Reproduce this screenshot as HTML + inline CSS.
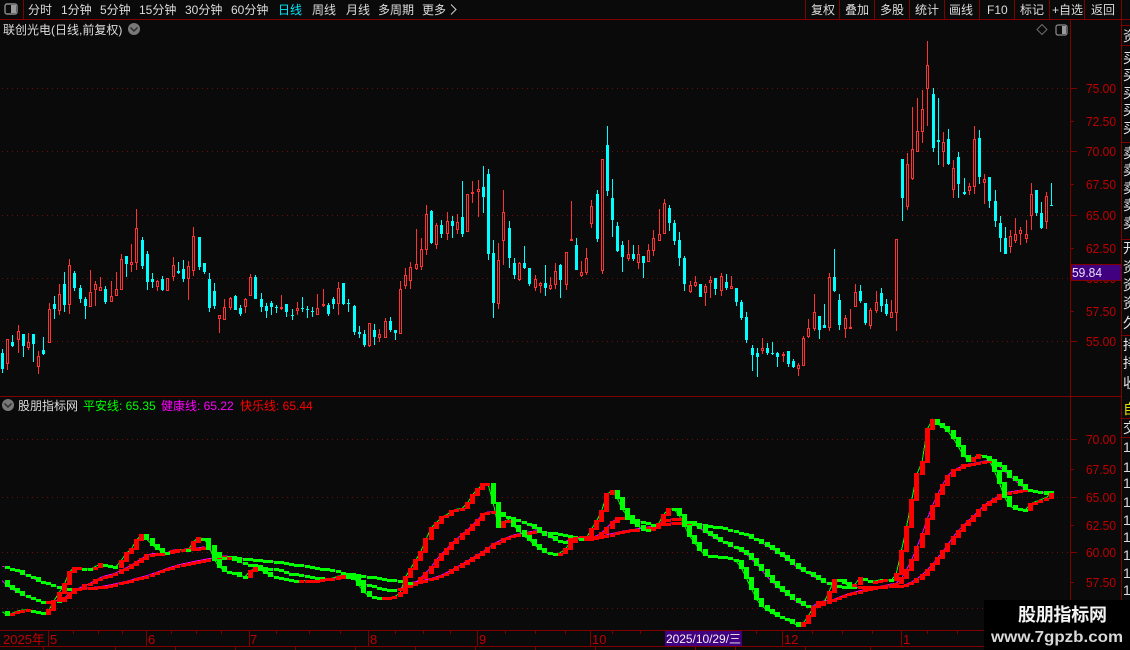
<!DOCTYPE html>
<html><head><meta charset="utf-8"><title>股朋指标网</title>
<style>
html,body{margin:0;padding:0;background:#0a0a0a;width:1130px;height:650px;overflow:hidden}
svg{display:block;position:absolute;left:0;top:0}
text{font-family:"Liberation Sans","WenQuanYi Zen Hei","Noto Sans CJK SC",sans-serif;font-size:12px;fill:#dcdcdc}
.ax{fill:#c00000;font-size:13px}
.c{font-family:"WenQuanYi Zen Hei","Noto Sans CJK SC",sans-serif;font-size:14px;fill:#e6e6e6}
</style></head><body>
<svg id="s" width="1130" height="650" viewBox="0 0 1130 650">
<rect width="1130" height="650" fill="#0a0a0a"/>
<g id="grid" stroke="#6a1010" stroke-width="1" stroke-dasharray="1 4" shape-rendering="crispEdges">
<path d="M2 88.5H1068M2 151.5H1068M2 215.5H1068M2 278.5H1068M2 341.5H1068M2 439.5H1068M2 497.5H1068M2 552.5H1068M2 608.5H1068"/>
</g>
<g id="chart" shape-rendering="crispEdges"></g>
<g stroke="#800000" stroke-width="1" fill="none" shape-rendering="crispEdges">
<path d="M0 19.5H1130M23.5 0V19M805.5 0V19M839.5 0V19M874.5 0V19M909.5 0V19M944.5 0V19M979.5 0V19M1014.5 0V19M1049.5 0V19M1084.5 0V19"/>
<path d="M1070.5 19V631M1121.5 0V650M0 396.5H1121M0 630.5H1121M0 646.5H1121"/>
<path d="M1122 25.5H1130M1122 45.5H1130M1122 142.5H1130M1122 239.5H1130M1122 335.5H1130M1122 418.5H1130M1122 437.5H1130"/>
<path d="M1071 88.5H1077M1071 121.5H1074M1071 151.5H1077M1071 184.5H1074M1071 215.5H1077M1071 248.5H1074M1071 278.5H1077M1071 311.5H1074M1071 341.5H1077"/>
<path d="M1071 439.5H1077M1071 469.5H1074M1071 497.5H1077M1071 525.5H1074M1071 552.5H1077M1071 582.5H1074M1071 608.5H1077"/>
<path d="M48.5 631V646M146.5 631V646M249.5 631V646M368.5 631V646M477.5 631V646M590.5 631V646M782.5 631V646M901.5 631V646"/>
<path d="M73.5 631V634M98.5 631V634M122.5 631V634M171.5 631V634M196.5 631V634M221.5 631V634M276.5 631V634M309.5 631V634M340.5 631V634M395.5 631V634M423.5 631V634M450.5 631V634M505.5 631V634M535.5 631V634M565.5 631V634M612.5 631V634M640.5 631V634M756.5 631V634M812.5 631V634M842.5 631V634M872.5 631V634M927.5 631V634M957.5 631V634"/>
<path d="M43.5 647V650M115.5 647V650M175.5 647V650M235.5 647V650M295.5 647V650M355.5 647V650M415.5 647V650M475.5 647V650M535.5 647V650M595.5 647V650M695.5 647V650M735.5 647V650M805.5 647V650M870.5 647V650"/>
</g>
<!-- toolbar -->
<rect x="5" y="4" width="12" height="10" rx="2" fill="none" stroke="#8c8c8c" stroke-width="1.4"/>
<rect x="11" y="5" width="5" height="8" fill="#9a9a9a"/>
<text x="28" y="14">分时</text><text x="61" y="14">1分钟</text><text x="100" y="14">5分钟</text><text x="139" y="14">15分钟</text><text x="185" y="14">30分钟</text><text x="231" y="14">60分钟</text>
<text x="278" y="14" style="fill:#00e8ff">日线</text><text x="312" y="14">周线</text><text x="346" y="14">月线</text><text x="378" y="14">多周期</text><text x="422" y="14">更多</text>
<path d="M451 4.5L456 9.5L451 14.5" fill="none" stroke="#d0d0d0" stroke-width="1"/>
<text x="811" y="14">复权</text><text x="845" y="14">叠加</text><text x="880" y="14">多股</text><text x="915" y="14">统计</text><text x="949" y="14">画线</text><text x="987" y="14">F10</text><text x="1020" y="14">标记</text><text x="1052" y="14">+自选</text><text x="1091" y="14">返回</text>
<!-- title -->
<text x="3" y="34">联创光电(日线,前复权)</text>
<circle cx="134" cy="29" r="6" fill="#787878"/><path d="M130.5 27.5L134 31L137.5 27.5" fill="none" stroke="#2a2a2a" stroke-width="1.4"/>
<path d="M1042 24.5L1047 29.5L1042 34.5L1037 29.5Z" fill="none" stroke="#6e6e6e"/>
<rect x="1056" y="25" width="11" height="10" rx="2" fill="none" stroke="#8c8c8c" stroke-width="1.2"/><rect x="1062" y="26" width="4" height="8" fill="#9a9a9a"/>
<!-- axis labels top -->
<g>
<text class="ax" x="1086" y="93" textLength="30" lengthAdjust="spacingAndGlyphs">75.00</text>
<text class="ax" x="1086" y="126" textLength="30" lengthAdjust="spacingAndGlyphs">72.50</text>
<text class="ax" x="1086" y="156" textLength="30" lengthAdjust="spacingAndGlyphs">70.00</text>
<text class="ax" x="1086" y="189" textLength="30" lengthAdjust="spacingAndGlyphs">67.50</text>
<text class="ax" x="1086" y="220" textLength="30" lengthAdjust="spacingAndGlyphs">65.00</text>
<text class="ax" x="1086" y="253" textLength="30" lengthAdjust="spacingAndGlyphs">62.50</text>
<text class="ax" x="1086" y="283" textLength="30" lengthAdjust="spacingAndGlyphs">60.00</text>
<text class="ax" x="1086" y="316" textLength="30" lengthAdjust="spacingAndGlyphs">57.50</text>
<text class="ax" x="1086" y="346" textLength="30" lengthAdjust="spacingAndGlyphs">55.00</text>
</g>
<rect x="1071.5" y="264.5" width="50" height="16" fill="#400080" stroke="#800000" shape-rendering="crispEdges"/>
<text x="1072" y="277" style="fill:#e8e0ff;font-size:13px" textLength="30" lengthAdjust="spacingAndGlyphs">59.84</text>
<!-- indicator header -->
<circle cx="8" cy="405" r="6" fill="#787878"/><path d="M4.5 403.5L8 407L11.5 403.5" fill="none" stroke="#2a2a2a" stroke-width="1.4"/>
<text x="18" y="410">股朋指标网</text>
<text x="83" y="410" style="fill:#00ff00">平安线: 65.35</text>
<text x="161" y="410" style="fill:#ff00ff">健康线: 65.22</text>
<text x="240" y="410" style="fill:#ff0000">快乐线: 65.44</text>
<!-- axis labels bottom -->
<g>
<text class="ax" x="1086" y="444" textLength="30" lengthAdjust="spacingAndGlyphs">70.00</text>
<text class="ax" x="1086" y="474" textLength="30" lengthAdjust="spacingAndGlyphs">67.50</text>
<text class="ax" x="1086" y="502" textLength="30" lengthAdjust="spacingAndGlyphs">65.00</text>
<text class="ax" x="1086" y="530" textLength="30" lengthAdjust="spacingAndGlyphs">62.50</text>
<text class="ax" x="1086" y="557" textLength="30" lengthAdjust="spacingAndGlyphs">60.00</text>
<text class="ax" x="1086" y="587" textLength="30" lengthAdjust="spacingAndGlyphs">57.50</text>
</g>
<!-- time axis -->
<g>
<text x="3" y="644" style="fill:#c00000;font-size:13px">2025年</text>
<text x="50" y="644" style="fill:#c00000;font-size:13px">5</text><text x="148" y="644" style="fill:#c00000;font-size:13px">6</text><text x="250" y="644" style="fill:#c00000;font-size:13px">7</text>
<text x="370" y="644" style="fill:#c00000;font-size:13px">8</text><text x="479" y="644" style="fill:#c00000;font-size:13px">9</text><text x="592" y="644" style="fill:#c00000;font-size:13px">10</text>
<text x="784" y="644" style="fill:#c00000;font-size:13px">12</text><text x="903" y="644" style="fill:#c00000;font-size:13px">1</text>
</g>
<rect x="665" y="631" width="77" height="15" fill="#400080" shape-rendering="crispEdges"/>
<text x="666" y="643" style="fill:#f0f0f0" textLength="75">2025/10/29/三</text>
<!-- right column -->
<g>
<text class="c" x="1123" y="41">资</text><text class="c" x="1123" y="63">买</text><text class="c" x="1123" y="80">买</text><text class="c" x="1123" y="98">买</text><text class="c" x="1123" y="115">买</text><text class="c" x="1123" y="133">买</text>
<text class="c" x="1123" y="158">卖</text><text class="c" x="1123" y="175">卖</text><text class="c" x="1123" y="193">卖</text><text class="c" x="1123" y="210">卖</text><text class="c" x="1123" y="228">卖</text>
<text class="c" x="1123" y="253">开</text><text class="c" x="1123" y="272">资</text><text class="c" x="1123" y="290">资</text><text class="c" x="1123" y="308">资</text><text class="c" x="1123" y="328">久</text>
<text class="c" x="1123" y="350">持</text><text class="c" x="1123" y="368">持</text><text class="c" x="1123" y="388">收</text>
<text class="c" x="1123" y="414" style="fill:#e0e000">自</text><text class="c" x="1123" y="433">交</text>
</g>
<g>
<text x="1123" y="452" style="font-size:14px">1</text><text x="1123" y="472" style="font-size:14px">1</text><text x="1123" y="488" style="font-size:14px">1</text><text x="1123" y="507" style="font-size:14px">1</text><text x="1123" y="525" style="font-size:14px">1</text><text x="1123" y="542" style="font-size:14px">1</text><text x="1123" y="560" style="font-size:14px">1</text><text x="1123" y="578" style="font-size:14px">1</text><text x="1123" y="595" style="font-size:14px">1</text>
</g>
<!-- watermark -->
<rect x="984" y="600" width="146" height="50" fill="#000"/>
<text x="1018" y="621" style="fill:#f4f4f4;font-size:18px;font-weight:bold" textLength="89">股朋指标网</text>
<text x="991" y="642" style="fill:#d8d8d8;font-size:16px;font-weight:bold" textLength="132" lengthAdjust="spacingAndGlyphs">www.7gpzb.com</text>
</svg>
<script>
var sets=[
[0,200,"c7,447,459,507,519 r22,418,418,491,510 c37,405,426,438,441 r55,375,394,421,459 c70,402,402,438,471 r85,400,427,445,450 c100,402,402,432,486 r115,453,469,502,522 c130,411,450,462,465 r148,309,328,428,428 c163,288,312,327,357 r178,252,283,332,345 c193,216,252,315,336 r208,177,196,314,342 c223,213,219,264,273 c241,255,264,297,309 c256,291,297,318,357 r271,210,277,320,320 r286,243,253,269,318 r301,231,262,272,273 c316,258,267,306,312 r334,243,289,307,307 r349,216,268,287,288 r364,162,178,269,269 c379,168,168,192,231 r394,132,187,194,216 r409,27,85,188,210 c427,111,120,198,207 c442,153,162,246,270 c457,219,237,246,264 r472,240,244,260,273 c487,228,237,270,273 r502,233,235,272,273 r520,171,196,230,243 c535,186,213,219,222 c550,180,207,237,246 r565,183,199,236,300 r580,81,109,212,228 c598,111,111,201,210 c613,189,189,216,222 c628,219,237,324,336 c643,249,273,318,327 r658,346,346,356,399 r673,297,322,359,360 r691,292,295,323,330 c706,285,288,330,330 c721,316,324,342,348 r736,294,298,320,339 r751,222,232,287,288 c766,225,231,297,297 c784,279,297,321,336 c799,309,318,333,354 c814,303,309,321,345 c829,315,321,324,339"],
[280,150,"r4,435,471,477,480 c19,462,462,486,501 c37,477,495,497,510 r52,456,474,483,495 c67,441,474,478,486 c82,468,477,480,504 c97,471,483,485,501 r112,432,474,495,495 r130,417,462,468,471 c145,459,465,492,498 c160,441,447,462,477 r175,396,414,462,495 c190,399,399,462,465 c205,447,459,462,486 c223,465,468,546,555 c238,528,546,552,564 c253,540,552,585,590 r268,519,519,588,590 c283,522,540,562,585 r298,537,552,564,575 r316,504,514,564,564 c331,501,513,541,546 c346,540,540,549,570 r361,393,417,552,552 r376,354,375,408,417 r391,336,351,393,417 r409,237,342,357,360 r424,264,297,351,360 r439,165,192,300,315 c454,180,183,279,282 r469,219,225,285,297 c484,210,225,252,264 r502,186,213,252,270 c517,198,213,228,264 r532,192,216,240,252 c547,93,201,252,261 r562,132,132,246,246 r577,93,126,132,159 r595,90,117,126,201 c610,48,111,141,189 c625,57,72,312,330 c640,270,309,459,504 r655,279,330,462,477 r670,120,186,273,345 c688,213,234,324,354 c703,324,339,375,387 r718,336,339,390,393 c733,288,339,354,357 c748,354,354,402,408 r766,375,387,414,423 r781,396,399,408,429 c796,345,399,414,438 r811,381,405,417,420 r826,339,363,405,417"],
[560,120,"c0,432,435,480,534 r19,397,397,494,510 r34,243,358,362,362 c49,354,375,450,450 r64,423,457,468,471 r79,384,415,459,465 r94,240,259,312,324 c112,210,222,357,366 r127,118,118,452,462 c142,18,75,213,228 c157,177,234,300,351 c172,306,318,393,396 c187,363,375,411,456 r205,360,403,417,423 c220,375,402,417,423 r235,375,403,428,447 c250,408,408,429,474 r265,372,391,425,426 r280,330,355,392,408 r298,267,343,362,363 r313,237,250,342,342 c328,255,264,309,333 c343,300,309,363,375 c358,336,360,414,438 c373,408,414,492,513 r391,484,496,516,519 r406,468,487,498,501 c421,492,492,531,531 r436,492,499,518,558 r451,468,481,488,534 c466,474,474,507,525 r484,459,469,513,528 c499,462,486,504,510 r514,468,499,506,507 c529,504,504,546,558 c544,540,546,594,600 c559,576,591,660,669 c577,675,684,705,753 c592,684,699,711,771 r607,654,684,693,702 c622,669,684,699,705 c637,666,699,702,705 c652,696,699,711,741 r670,696,702,708,726 c685,693,693,732,741 c700,717,723,741,744 r715,729,736,747,768 r730,648,654,738,738 r745,597,624,651,654 r763,522,576,627,633 c778,588,588,630,657 c793,552,615,624,624 r808,459,471,624,633 c823,387,471,513,516"],
[840,30,"c-2,792,810,885,900 r16,855,865,896,924 r31,837,890,896,896 r46,762,786,830,830 c61,765,783,813,819 c76,819,819,879,885 r91,834,840,888,897 r109,783,816,843,849 c124,774,789,828,846 c139,807,822,852,858 r154,810,846,863,864 r169,627,627,848,903 c187,387,387,504,573 r202,369,403,530,540 r217,231,357,447,450 r232,204,304,365,365 r247,180,237,306,339 r262,33,105,177,288 c280,174,192,354,366 c295,204,330,335,405 r310,306,336,366,411 c325,297,327,402,405 r340,390,414,480,504 c355,366,381,462,504 c373,444,486,492,495 r388,459,468,483,495 r403,288,327,471,492 c418,300,324,441,462 r433,432,447,458,522 c448,441,441,513,534 c466,480,513,573,591 c481,558,579,624,666 c496,591,624,672,672 r511,600,618,651,669 r526,564,612,633,639 r541,591,600,612,645 r559,570,612,627,639 r574,459,492,558,600 c589,480,480,549,558 c604,516,549,594,597 r619,486,498,576,597 c634,459,525,528,528"]
];
var o=[],BG="#0a0a0a",RED="#ff3232",CY="#00ffff";
function R(x,y,w,h,f){o.push('<rect x="'+x+'" y="'+y+'" width="'+w+'" height="'+h+'" fill="'+f+'"/>');}
sets.forEach(function(s){s[2].split(" ").forEach(function(t){
 var r=t[0]=="r",a=t.slice(1).split(",").map(Number),cx=Math.floor(s[0]+a[0]/3),
 wt=Math.round(s[1]+a[1]/3),bt=Math.round(s[1]+a[2]/3),bb=Math.round(s[1]+a[3]/3),wb=Math.round(s[1]+a[4]/3);
 if(bb-bt<1)bb=bt+1;var col=r?RED:CY;
 if(wb>wt)R(cx,wt,1,wb-wt,col);
 R(cx-1,bt,3,bb-bt,col);
 if(r&&bb-bt>2)R(cx,bt+1,1,bb-bt-2,BG);
});});
var F=[[0,390,[8,665,22,676,55,662,80,658,115,665,130,674,148,660,163,630,178,607,193,583,208,545,223,533,240,533,256,538,270,538,285,530,300,522,315,525,335,530,350,530,365,510,380,488,395,476,409,450,425,435,440,447,457,465,470,475,487,486,505,488,520,484,535,480,550,478,565,480,580,455,598,441,613,447,628,470,643,510,658,530,673,543,690,547,706,550,721,558,736,560,751,543,766,535,784,540,799,550,814,558,829,560,860,567,875,572,900,572,935,572,965,568,990,567]],
[330,460,[0,358,25,348,50,345,70,350,88,378,103,398,118,408,133,410,148,415,165,413,190,413,211,398,226,352,241,327,259,298,274,272,289,235,304,203,319,188,334,172,352,163,367,153,382,147,397,145,412,130,427,105,445,85,460,72,475,72,490,130,505,200,520,185,538,178,553,200,568,215,583,228,598,240,613,255,628,265,646,277,661,283,676,283,691,278,709,265,724,243,739,235,754,238,769,235,784,208,799,185,817,148,832,98,847,92,862,115,877,148,895,172,910,190,925,198,940,210,955,210,970,205,985,192]],
[660,460,[10,165,27,145,42,148,57,165,72,195,90,230,105,250,120,270,135,285,160,288,185,290,200,290,228,303,243,322,258,352,276,390,291,420,307,440,322,450,337,460,352,467,367,473,382,480,400,490,415,497,430,490,445,467,462,440,477,432,492,428,507,395,522,360,537,360,555,370,570,380,585,372,600,355,615,360,630,365,650,362,665,358,680,358,695,362,708,345,727,260,742,190,757,110,772,35,787,5]],
[890,395,[112,100,128,72,145,90,160,97,175,110,190,130,205,155,222,185,238,200,253,188,268,178,283,185,298,195,315,232,330,268,345,310,360,335,378,342,408,345,423,325,455,313,470,307,485,295]]];
var M=[[0,390,[8,572,22,587,37,598,55,607,70,615,85,622,100,627,115,632,130,637,148,637,163,630,178,632,193,625,208,610,223,600,240,593,256,586,270,580,285,572,300,563,320,556,340,552,365,540,380,533,395,525,410,515,427,505,442,495,457,491,487,490,505,487,520,480,550,478,580,476,598,473,613,470,628,478,643,490,658,500,673,505,690,505,706,508,721,518,740,522,770,527,784,530,800,535,830,538,860,548,900,555,935,560,965,565,990,566]],
[330,460,[0,345,25,352,50,348,73,358,88,365,103,372,118,375,148,385,190,392,211,385,241,375,259,367,274,352,289,337,304,320,319,300,334,282,352,265,367,248,382,235,397,222,412,210,427,195,445,178,460,160,475,155,490,155,505,160,520,168,538,172,553,178,568,182,583,190,598,195,613,205,628,215,646,225,661,232,676,240,691,243,709,245,724,235,739,232,769,232,784,232,799,228,817,218,832,202,847,185,862,175,885,172,910,178,925,183,955,192,985,198]],
[660,460,[0,180,30,178,57,175,72,182,90,187,105,195,120,205,135,215,150,225,165,235,185,243,200,252,228,265,258,280,276,298,291,315,307,332,322,350,337,365,352,380,367,392,385,405,400,418,415,428,430,435,445,440,462,437,477,425,492,423,522,418,537,412,555,405,570,400,600,392,630,385,665,378,695,372,710,370,727,352,742,325,757,295,772,258,787,220,802,175,820,130,835,98,850,70,865,45,880,30,900,22]],
[890,395,[222,210,238,207,268,202,298,195,315,205,330,215,345,230,360,245,378,258,392,272,408,283,423,288,455,290,485,292]]];
var S=[[0,390,[3,528,22,533,37,538,55,545,70,552,85,558,100,565,115,572,130,577,148,583,163,588,178,590,193,597,208,597,223,597,240,595,270,593,300,590,330,585,360,578,385,573,410,565,440,557,470,547,500,536,530,526,560,519,590,513,620,507,640,504,670,497,690,500,720,505,770,510,800,512,850,518,900,525,940,532,990,539]],
[330,460,[0,332,30,337,60,342,100,347,130,352,165,357,200,362,240,368,275,362,305,355,335,345,365,330,395,313,425,295,455,278,490,252,520,237,550,225,585,218,620,212,660,218,700,222,740,235,770,238,800,232,840,222,880,213,920,207,960,200,990,192]],
[660,460,[0,195,30,190,57,188,90,188,120,192,150,197,185,203,228,215,258,225,291,240,322,258,352,278,385,300,415,325,445,340,477,358,507,372,537,380,570,382,600,382,630,382,665,380,695,378,727,378,757,365,787,345,820,310,850,272,880,230,900,205]],
[890,395,[238,375,253,360,268,345,283,330,298,320,315,310,330,300,345,293,378,288,408,283,440,290,470,295,490,295]]];
function keys(A){var k=[],L=-1;A.forEach(function(s){for(var i=0;i<s[2].length;i+=2){var x=s[0]+s[2][i]/3,y=s[1]+s[2][i+1]/3;if(x>L){k.push([x,y]);L=x;}}});return k;}
function at(k,x){if(x<=k[0][0])return k[0][1];for(var i=1;i<k.length;i++){if(x<=k[i][0]){var a=k[i-1],b=k[i];return a[1]+(b[1]-a[1])*(x-a[0])/(b[0]-a[0]);}}return k[k.length-1][1];}
var N=204;
function sample(A){var k=keys(A),ys=[];for(var i=0;i<N;i++)ys.push(at(k,2.3+5.167*i));return ys;}
function thin(ys,c){var p=[];ys.forEach(function(y,i){p.push((2.3+5.167*i).toFixed(1)+","+y.toFixed(1));});o.push('<polyline points="'+p.join(" ")+'" fill="none" stroke="'+c+'" stroke-width="1"/>');}
function blocks(ys){for(var j=1;j<N;j++){var X=Math.floor(2.3+5.167*j),y0=Math.round(ys[j-1]),y1=Math.round(ys[j]),t=Math.min(y0,y1),h=Math.abs(y1-y0);
  if(h<3){t=Math.round((y0+y1)/2)-1;h=3;}else{t-=1;h+=2;}
  R(X-2,t,5,h,ys[j]<=ys[j-1]?"#ff0000":"#00ff00");}}
var ya=sample(S),yb=sample(M),yc=sample(F);
thin(ya,"#ff00ff");thin(yb,"#ff00ff");thin(yc,"#00ff00");
blocks(ya);blocks(yb);blocks(yc);
document.getElementById("chart").innerHTML=o.join("");
</script>
</body></html>
